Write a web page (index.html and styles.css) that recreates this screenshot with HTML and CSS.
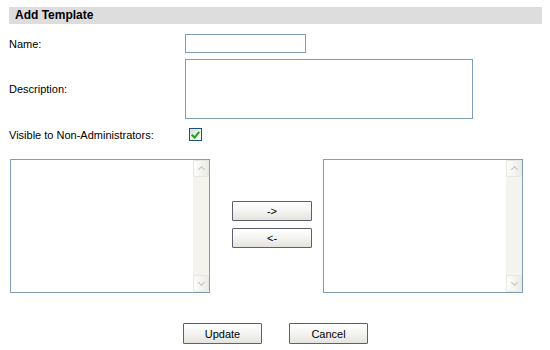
FILE: index.html
```html
<!DOCTYPE html>
<html lang="en">
<head>
    <meta charset="UTF-8">
    <title>Add Template</title>
    <link rel="stylesheet" href="styles.css">
</head>
<body>
    <div class="page">
        <div class="section-title">Add Template</div>

        <div class="form">
            <label class="label" for="name">Name:</label>
            <div class="field"><input id="name" class="text-input name-input" type="text"></div>

            <label class="label" for="desc">Description:</label>
            <div class="field"><textarea id="desc" class="text-input desc-input"></textarea></div>

            <label class="label" for="visible">Visible to Non-Administrators:</label>
            <div class="field"><span id="visible" class="checkbox checked"></span></div>
        </div>

        <div class="lists">
            <div class="listbox">
                <div class="list-items"></div>
                <div class="scrollbar">
                    <span class="scroll-btn up"></span>
                    <span class="scroll-track"></span>
                    <span class="scroll-btn down"></span>
                </div>
            </div>

            <div class="movers">
                <button class="btn move-btn">-&gt;</button>
                <button class="btn move-btn">&lt;-</button>
            </div>

            <div class="listbox">
                <div class="list-items"></div>
                <div class="scrollbar">
                    <span class="scroll-btn up"></span>
                    <span class="scroll-track"></span>
                    <span class="scroll-btn down"></span>
                </div>
            </div>
        </div>

        <div class="actions">
            <button class="btn action-btn">Update</button>
            <button class="btn action-btn">Cancel</button>
        </div>
    </div>
</body>
</html>
```

FILE: styles.css
```css
* {
    margin: 0;
    padding: 0;
    box-sizing: border-box;
}

body {
    font-family: "Liberation Sans", Arial, sans-serif;
    font-size: 11px;
    color: #000;
    background: #fff;
}

.page {
    width: 550px;
    padding: 7px 8px 0 9px;
}

.section-title {
    height: 17px;
    line-height: 17px;
    padding-left: 6px;
    background: #dddddd;
    font-size: 12px;
    font-weight: bold;
}

/* form rows */
.form {
    display: grid;
    grid-template-columns: 176px auto;
    grid-template-rows: 19px 60px 19px;
    row-gap: 6px;
    align-items: center;
    margin-top: 10px;
}

.label {
    display: block;
}

.field {
    display: flex;
}

.text-input {
    display: block;
    border: 1px solid #7f9db9;
    background: #fff;
    font-family: inherit;
    font-size: 11px;
    resize: none;
    outline: none;
}

.name-input {
    width: 121px;
    height: 19px;
}

.desc-input {
    width: 288px;
    height: 60px;
}

.checkbox {
    display: block;
    width: 13px;
    height: 13px;
    margin-left: 4px;
    border: 1px solid #1c5180;
    background: linear-gradient(135deg, #dcdcd7, #fff);
    position: relative;
}

.checkbox.checked::after {
    content: "";
    position: absolute;
    left: 3px;
    top: 1px;
    width: 3px;
    height: 6px;
    border: solid #21a121;
    border-width: 0 2px 2px 0;
    transform: rotate(40deg);
}

/* list boxes */
.lists {
    display: flex;
    margin-top: 15px;
    margin-left: 1px;
}

.listbox {
    display: flex;
    width: 200px;
    height: 134px;
    border: 1px solid #7f9db9;
    background: #fff;
}

.list-items {
    flex: 1;
}

.scrollbar {
    display: flex;
    flex-direction: column;
    width: 16px;
    background: #f4f3ee;
}

.scroll-track {
    flex: 1;
}

.scroll-btn {
    display: block;
    height: 17px;
    border: 1px solid #e8e8e2;
    border-radius: 2px;
    background: linear-gradient(to right, #fdfdfb, #ecebe5);
    position: relative;
}

.scroll-btn::after {
    content: "";
    position: absolute;
    left: 5px;
    width: 4px;
    height: 4px;
    border: solid #c2c2bc;
    border-width: 1px 0 0 1px;
}

.scroll-btn.up::after {
    top: 6px;
    transform: rotate(45deg);
}

.scroll-btn.down::after {
    top: 4px;
    transform: rotate(225deg);
}

.movers {
    display: flex;
    flex-direction: column;
    gap: 7px;
    width: 113px;
    padding-left: 22px;
    padding-top: 42px;
}

/* buttons */
.btn {
    font-family: inherit;
    font-size: 11px;
    color: #000;
    border: 1px solid #5f5f6d;
    border-radius: 1px;
    background: linear-gradient(to bottom, #ffffff 0%, #f4f4f2 50%, #e4e3dd 100%);
    cursor: pointer;
}

.move-btn {
    width: 80px;
    height: 20px;
}

.actions {
    display: flex;
    justify-content: center;
    gap: 27px;
    margin-top: 30px;
}

.action-btn {
    width: 79px;
    height: 21px;
}
```
